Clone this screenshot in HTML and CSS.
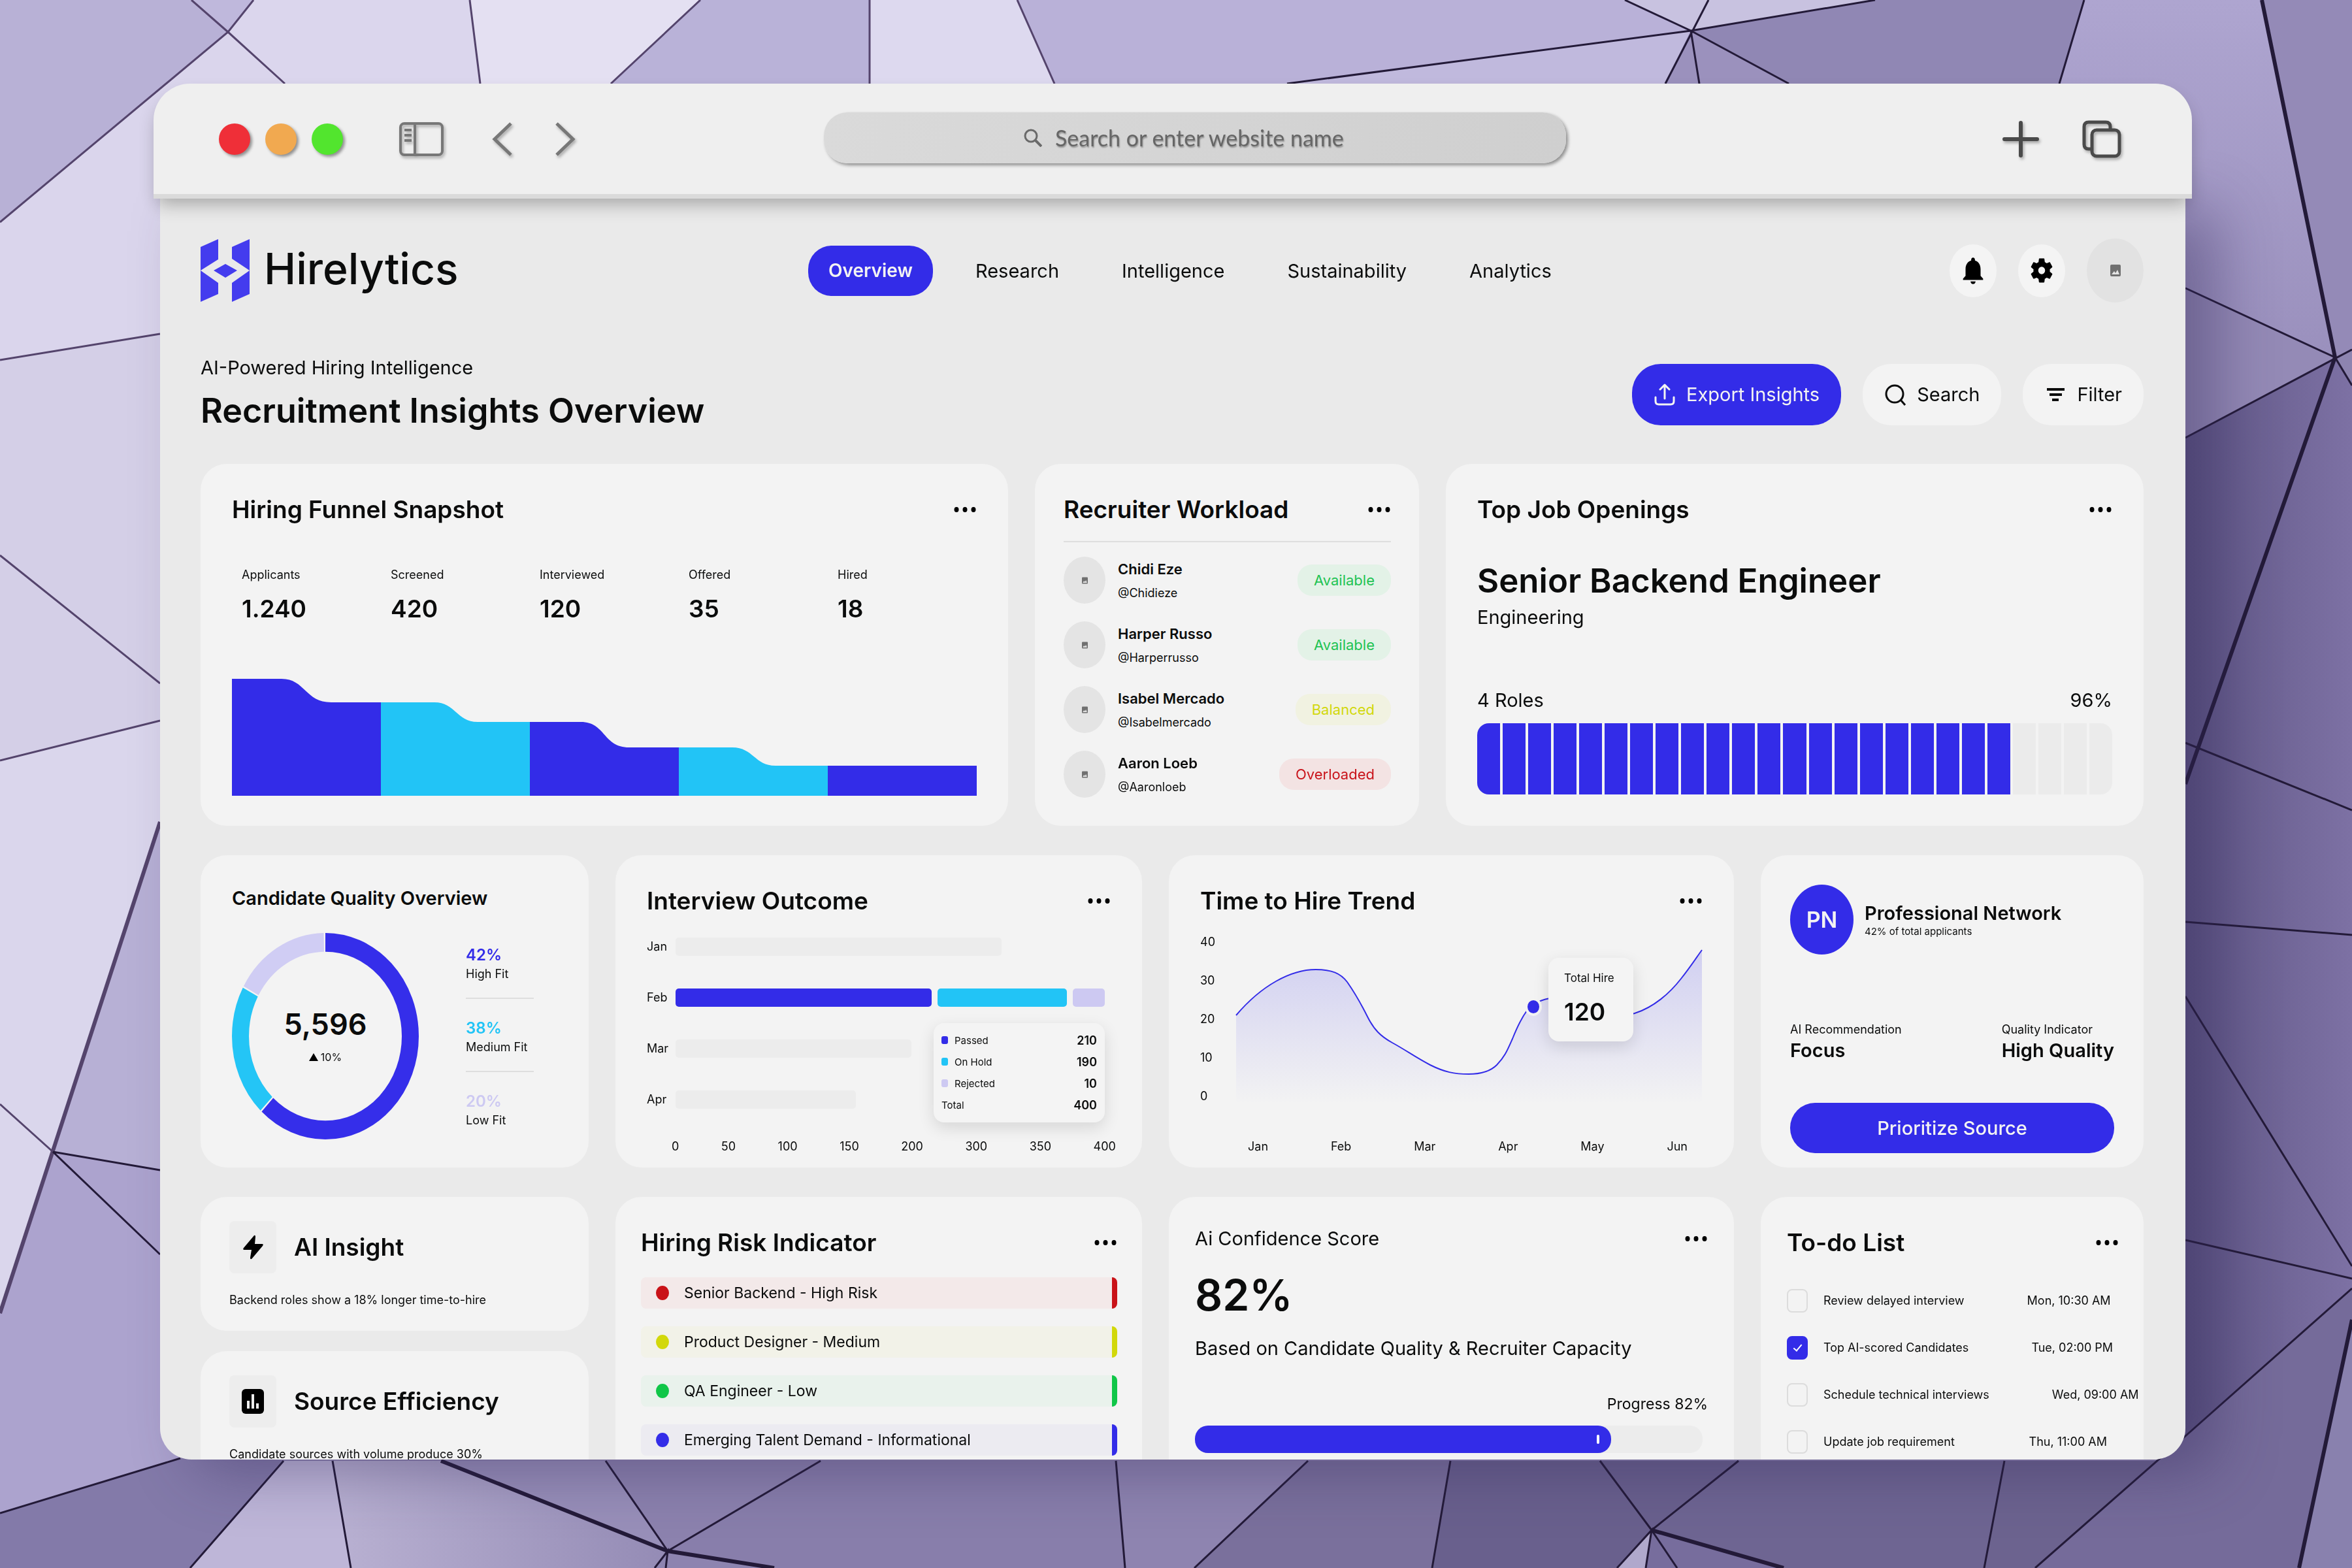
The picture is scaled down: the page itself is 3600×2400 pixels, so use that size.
FILE: index.html
```html
<!DOCTYPE html>
<html lang="en">
<head>
    <meta charset="UTF-8">
    <meta name="viewport" content="width=device-width, initial-scale=1.0">
    <title>Hirelytics</title>
    <link rel="stylesheet" href="styles.css">
</head>
<body>
    <!-- shared icons -->
    <svg class="sprite" aria-hidden="true">
        <symbol id="dots" viewBox="0 0 36 10">
            <ellipse cx="5" cy="5" rx="3.500" ry="4"/>
            <ellipse cx="18" cy="5" rx="3.500" ry="4"/>
            <ellipse cx="31" cy="5" rx="3.500" ry="4"/>
        </symbol>
        <symbol id="photo" viewBox="0 0 16 18">
            <rect width="16" height="18" rx="2" fill="#707070"/>
            <path d="M2 15l4-5 2 3 3-5 3 7z" fill="#e4e4e4"/>
        </symbol>
    </svg>

    <svg class="backdrop" viewBox="0 0 3600 2400" preserveAspectRatio="none" aria-hidden="true">
        <defs>
            <linearGradient id="gRight" x1="0" x2="1" y1="0" y2="0">
                <stop offset="0" stop-color="#5f5685"/>
                <stop offset="1" stop-color="#7d71a4"/>
            </linearGradient>
            <linearGradient id="gTopRight" x1="0" x2="0" y1="0" y2="1">
                <stop offset="0" stop-color="#aea5d0"/>
                <stop offset="1" stop-color="#9a90bd"/>
            </linearGradient>
            <linearGradient id="gBottom" x1="0" x2="1" y1="0" y2="0">
                <stop offset="0" stop-color="#b9b1d2"/>
                <stop offset="1" stop-color="#948bb5"/>
            </linearGradient>
        </defs>
        <rect width="3600" height="2400" fill="#8d84b0"/>
        <path fill="#b8b1d6" d="M0 0H293L349 49 0 340z"/>
        <path fill="#bfb8dc" d="M293 0H388L349 49z"/>
        <path fill="#dbd6ed" d="M388 0H719L735 128V300H436V128L349 49z"/>
        <path fill="#dad5ec" d="M0 340L349 49 436 128 245 511 0 551z"/>
        <path fill="#d4cfe7" d="M0 551L245 511V1103L0 1164z"/>
        <path fill="#dad6ec" d="M0 1164L245 1103V1258L0 2010z"/>
        <path fill="#b7b0d5" d="M245 1258V1791L81 1763z"/>
        <path fill="#aca3ce" d="M0 2010L81 1763 245 1791 276 2232 0 2316z"/>
        <path fill="#837aa9" d="M0 2316L276 2232H434L291 2400H0z"/>
        <path fill="#e4e0f2" d="M719 0H1072L935 128H735z"/>
        <path fill="#b9b2d8" d="M1072 0H1331V128H935z"/>
        <path fill="#ddd9ef" d="M1331 0H1557L1614 128H1331z"/>
        <path fill="#b9b1d8" d="M1557 0H2487L2588 47 1970 128H1614z"/>
        <path fill="#c0b9dd" d="M1970 128L2588 47 2549 128z"/>
        <path fill="#c8c2e0" d="M2487 0H2870L2588 47z"/>
        <path fill="#9b91bd" d="M2588 47L2549 128H2738z"/>
        <path fill="#9087b4" d="M2588 47L2870 0H3190L3152 128H2738z"/>
        <path fill="url(#gTopRight)" d="M3190 0H3462L3574 547 3345 441 3152 128z"/>
        <path fill="#948ab7" d="M3462 0H3600V535L3574 547z"/>
        <path fill="#948ab6" d="M3345 441L3574 547 3345 670z"/>
        <path fill="url(#gRight)" d="M3345 670L3574 547 3600 590V1972L3345 2198z"/>
        <path fill="#756b9a" d="M3302 2236L3345 2198 3600 1972V2020L3519 2400H3115z"/>
        <path fill="#8981ae" d="M3600 2020V2400H3519z"/>
        <path fill="#beb6d8" d="M434 2236H509L537 2400H291z"/>
        <path fill="url(#gBottom)" d="M509 2236H675L1022 2374 1002 2400H537z"/>
        <path fill="#988fb9" d="M675 2236H927L1022 2374z"/>
        <path fill="#8c82ae" d="M927 2236H1256L1022 2374z"/>
        <path fill="#887eab" d="M1256 2236H1708L1722 2400H1185L1022 2374z"/>
        <path fill="#8e84b0" d="M1708 2236H2002L1828 2400H1722z"/>
        <path fill="#7a709c" d="M2002 2236H2220L2192 2400H1828z"/>
        <path fill="#69608d" d="M2220 2236H2661L2528 2342 2475 2400H2192z"/>
        <path fill="#b0a8cc" d="M2528 2342L2475 2400H2519z"/>
        <path fill="#776d9d" d="M2528 2342L2519 2400H2730z"/>
        <path fill="#6e6592" d="M2661 2236H3068L3037 2400H2730L2528 2342z"/>
        <path fill="#6c638f" d="M3068 2236H3302L3115 2400H3037z"/>
        <g class="seams seams-light">
            <path d="M0 340L349 49 388 0M293 0L349 49 436 128M0 551L245 511M0 850L245 1046M0 1164L245 1103M0 1690L81 1763M719 0L735 128M1072 0L935 128M1331 0V128M1557 0L1614 128"/>
            <path class="thick" d="M0 2010L245 1258"/>
        </g>
        <g class="seams">
            <path d="M81 1763L245 1791M81 1763L245 1920M0 2316L276 2232M291 2400L434 2236M1970 128L2588 47 2870 0M2487 0L2588 47 2738 128M2615 0L2549 128M2588 47L2601 128M3190 0L3152 128M3345 441L3574 547 3600 590M3345 670L3600 535M3345 1137L3600 1240M3345 1411L3600 1431M3345 1525L3600 1938M3345 1898L3600 1957M3600 1972L3345 2198 3115 2400M509 2236L537 2400M927 2236L1022 2374 1256 2236M1002 2400L1022 2374 1019 2400M1708 2236L1722 2400M2002 2236L1828 2400M2220 2236L2192 2400M2449 2236L2528 2342 2661 2236M2475 2400L2528 2342 2519 2400M2528 2342L2567 2400M3068 2236L3037 2400"/>
            <path class="thick" d="M675 2236L1022 2374 1185 2400M3462 0L3574 547 3345 1200M3600 2020L3519 2400M2528 2342L2730 2400"/>
        </g>
    </svg>

    <div class="window">
        <div class="chrome">
            <div class="chrome-left">
                <div class="lights">
                    <span class="light red"></span>
                    <span class="light orange"></span>
                    <span class="light green"></span>
                </div>
                <button class="sidebar-btn" aria-label="Toggle sidebar">
                    <svg width="68" height="52" viewBox="0 0 68 52" fill="none" stroke="#777" stroke-width="4">
                        <rect x="2" y="2" width="64" height="48" rx="6"/>
                        <path d="M24 2V50M8 12H19M8 20H19M8 28H19"/>
                    </svg>
                </button>
                <button class="back-btn" aria-label="Back">
                    <svg width="32" height="52" viewBox="0 0 32 52" fill="none" stroke="#777" stroke-width="5"><path d="M29 2L4 26 29 50"/></svg>
                </button>
                <button aria-label="Forward">
                    <svg width="32" height="52" viewBox="0 0 32 52" fill="none" stroke="#777" stroke-width="5"><path d="M3 2L28 26 3 50"/></svg>
                </button>
            </div>
            <label class="address">
                <svg width="28" height="28" viewBox="0 0 28 28" fill="none" stroke="#6a6a6a" stroke-width="3"><circle cx="11" cy="11" r="9"/><path d="M18 18L27 27" stroke-width="4"/></svg>
                <input type="text" aria-label="Address" placeholder="Search or enter website name">
            </label>
            <div class="chrome-right">
                <button aria-label="New tab">
                    <svg width="56" height="56" viewBox="0 0 56 56" fill="none" stroke="#4a4a4a" stroke-width="6" stroke-linecap="round"><path d="M28 3V53M3 28H53"/></svg>
                </button>
                <button aria-label="Show tabs">
                    <svg width="60" height="58" viewBox="0 0 60 58" fill="none" stroke="#4a4a4a" stroke-width="5">
                        <rect x="15" y="15" width="42" height="40" rx="7"/>
                        <path d="M13 44H10Q3 44 3 37V10Q3 3 10 3H36Q43 3 43 10V13"/>
                    </svg>
                </button>
            </div>
        </div>

        <div class="page">
            <header class="topbar">
                <a href="#" class="logo">
                    <svg width="75" height="96" viewBox="0 0 75 96" fill="#443cee">
                        <path d="M0 12L27 0V31L0 48zM0 48L27 67V84L0 96zM48 12L75 0V48L48 30zM75 48V84L48 96V67zM20 48L38 38 56 48 38 59z"/>
                    </svg>
                    <span>Hirelytics</span>
                </a>
                <nav class="nav">
                    <a href="#" class="active">Overview</a>
                    <a href="#">Research</a>
                    <a href="#">Intelligence</a>
                    <a href="#">Sustainability</a>
                    <a href="#">Analytics</a>
                </nav>
                <div class="tools">
                    <button class="tool" aria-label="Notifications">
                        <svg width="46" height="50" viewBox="0 0 24 24" preserveAspectRatio="none"><path d="M12 22c1.100 0 2-.9 2-2h-4c0 1.100.89 2 2 2zM18 16v-5c0-3.070-1.640-5.640-4.500-6.320V4c0-.83-.67-1.500-1.500-1.500s-1.500.67-1.500 1.500v.68C7.630 5.360 6 7.920 6 11v5l-2 2v1h16v-1z"/></svg>
                    </button>
                    <button class="tool" aria-label="Settings">
                        <svg width="42" height="46" viewBox="0 0 24 24" preserveAspectRatio="none"><path d="M19.140 12.940c.04-.3.06-.61.06-.94 0-.32-.02-.64-.07-.94l2.030-1.580c.18-.14.23-.41.12-.61l-1.920-3.320c-.12-.22-.37-.29-.59-.22l-2.390.96c-.5-.38-1.030-.7-1.620-.94l-.36-2.540c-.04-.24-.24-.41-.48-.41h-3.840c-.24 0-.43.17-.47.41l-.36 2.540c-.59.24-1.130.57-1.620.94l-2.390-.96c-.22-.08-.47 0-.59.22L2.740 8.870c-.12.21-.08.47.12.61l2.030 1.580c-.05.3-.09.63-.09.94s.02.64.07.94l-2.030 1.580c-.18.14-.23.41-.12.61l1.920 3.320c.12.22.37.29.59.22l2.390-.96c.5.38 1.030.7 1.620.94l.36 2.540c.05.24.24.41.48.41h3.840c.24 0 .44-.17.47-.41l.36-2.540c.59-.24 1.130-.56 1.620-.94l2.390.96c.22.08.47 0 .59-.22l1.920-3.320c.12-.22.07-.47-.12-.61l-2.010-1.580zM12 15a3 3 0 110-6 3 3 0 010 6z"/></svg>
                    </button>
                    <span class="user"><svg width="16" height="18"><use href="#photo"/></svg></span>
                </div>
            </header>

            <section class="heading">
                <div>
                    <p>AI-Powered Hiring Intelligence</p>
                    <h1>Recruitment Insights Overview</h1>
                </div>
                <div class="actions">
                    <button class="action primary">
                        <svg width="34" height="34" viewBox="0 0 34 34" fill="none" stroke="currentColor" stroke-width="3" stroke-linecap="round" stroke-linejoin="round"><path d="M17 23V3M10 9L17 2 24 9M3 21V27Q3 32 8 32H26Q31 32 31 27V21"/></svg>
                        Export Insights
                    </button>
                    <button class="action">
                        <svg width="34" height="34" viewBox="0 0 34 34" fill="none" stroke="currentColor" stroke-width="3"><circle cx="16" cy="16" r="13"/><path d="M25 25L32 33"/></svg>
                        Search
                    </button>
                    <button class="action">
                        <svg width="34" height="34" viewBox="0 0 34 34" fill="none" stroke="currentColor" stroke-width="4"><path d="M4 9H31M8 17H27M12 25H22"/></svg>
                        Filter
                    </button>
                </div>
            </section>

            <div class="row row-top">
                <section class="card funnel">
                    <div class="card-head">
                        <h2>Hiring Funnel Snapshot</h2>
                        <button class="more" aria-label="More"><svg width="36" height="10"><use href="#dots"/></svg></button>
                    </div>
                    <dl class="stats">
                        <div><dt>Applicants</dt><dd>1.240</dd></div>
                        <div><dt>Screened</dt><dd>420</dd></div>
                        <div><dt>Interviewed</dt><dd>120</dd></div>
                        <div><dt>Offered</dt><dd>35</dd></div>
                        <div><dt>Hired</dt><dd>18</dd></div>
                    </dl>
                    <svg class="funnel-chart" viewBox="0 0 1140 179" preserveAspectRatio="none">
                        <path class="blue" d="M0 0H76C112 0 112 36 152 36H228V179H0z"/>
                        <path class="cyan" d="M228 36H310C342 36 344 66 376 66H456V179H228z"/>
                        <path class="blue" d="M456 66H534C572 66 568 105 608 105H684V179H456z"/>
                        <path class="cyan" d="M684 105H766C798 105 800 133 832 133H912V179H684z"/>
                        <path class="blue" d="M912 133H1140V179H912z"/>
                    </svg>
                </section>

                <section class="card workload">
                    <div class="card-head">
                        <h2>Recruiter Workload</h2>
                        <button class="more" aria-label="More"><svg width="36" height="10"><use href="#dots"/></svg></button>
                    </div>
                    <ul class="people">
                        <li>
                            <span class="avatar"><svg width="9" height="11"><use href="#photo"/></svg></span>
                            <div><strong>Chidi Eze</strong><span>@Chidieze</span></div>
                            <em class="status available">Available</em>
                        </li>
                        <li>
                            <span class="avatar"><svg width="9" height="11"><use href="#photo"/></svg></span>
                            <div><strong>Harper Russo</strong><span>@Harperrusso</span></div>
                            <em class="status available">Available</em>
                        </li>
                        <li>
                            <span class="avatar"><svg width="9" height="11"><use href="#photo"/></svg></span>
                            <div><strong>Isabel Mercado</strong><span>@Isabelmercado</span></div>
                            <em class="status balanced">Balanced</em>
                        </li>
                        <li>
                            <span class="avatar"><svg width="9" height="11"><use href="#photo"/></svg></span>
                            <div><strong>Aaron Loeb</strong><span>@Aaronloeb</span></div>
                            <em class="status overloaded">Overloaded</em>
                        </li>
                    </ul>
                </section>

                <section class="card openings">
                    <div class="card-head">
                        <h2>Top Job Openings</h2>
                        <button class="more" aria-label="More"><svg width="36" height="10"><use href="#dots"/></svg></button>
                    </div>
                    <h3>Senior Backend Engineer</h3>
                    <p>Engineering</p>
                    <div class="roles"><span>4 Roles</span><span>96%</span></div>
                    <div class="segments">
                        <i></i><i></i><i></i><i></i><i></i><i></i><i></i><i></i><i></i><i></i><i></i><i></i><i></i><i></i><i></i><i></i><i></i><i></i><i></i><i></i><i></i><i class="off"></i><i class="off"></i><i class="off"></i><i class="off"></i>
                    </div>
                </section>
            </div>

            <div class="row row-four">
                <section class="card quality">
                    <h2>Candidate Quality Overview</h2>
                    <div class="quality-body">
                        <div class="donut">
                            <svg viewBox="0 0 286 286" preserveAspectRatio="none">
                                <g fill="none" stroke-width="26" transform="rotate(-90 143 143)">
                                    <circle cx="143" cy="143" r="130" pathLength="360" stroke="#352eea" stroke-dasharray="223 137"/>
                                    <circle cx="143" cy="143" r="130" pathLength="360" stroke="#24c5f6" stroke-dasharray="74 286" stroke-dashoffset="-224"/>
                                    <circle cx="143" cy="143" r="130" pathLength="360" stroke="#d0cdf4" stroke-dasharray="60 300" stroke-dashoffset="-299"/>
                                </g>
                            </svg>
                            <div class="donut-label">
                                <strong>5,596</strong>
                                <span><svg width="14" height="12" viewBox="0 0 14 12"><path d="M7 0L14 12H0z"/></svg>10%</span>
                            </div>
                        </div>
                        <ul class="fits">
                            <li><strong class="high">42%</strong><span>High Fit</span></li>
                            <li><strong class="medium">38%</strong><span>Medium Fit</span></li>
                            <li><strong class="low">20%</strong><span>Low Fit</span></li>
                        </ul>
                    </div>
                </section>

                <section class="card outcome">
                    <div class="card-head">
                        <h2>Interview Outcome</h2>
                        <button class="more" aria-label="More"><svg width="36" height="10"><use href="#dots"/></svg></button>
                    </div>
                    <div class="bars">
                        <div class="bar-row"><span>Jan</span><div class="track"><i style="width: 76%"></i></div></div>
                        <div class="bar-row"><span>Feb</span><div class="track stacked"><i class="blue" style="flex-grow: 392"></i><i class="cyan" style="flex-grow: 198"></i><i class="lilac" style="flex-grow: 49"></i></div></div>
                        <div class="bar-row"><span>Mar</span><div class="track"><i style="width: 55%"></i></div></div>
                        <div class="bar-row"><span>Apr</span><div class="track"><i style="width: 42%"></i></div></div>
                        <table class="tip outcome-tip">
                            <tr><th><i class="blue"></i>Passed</th><td>210</td></tr>
                            <tr><th><i class="cyan"></i>On Hold</th><td>190</td></tr>
                            <tr><th><i class="lilac"></i>Rejected</th><td>10</td></tr>
                            <tr><th>Total</th><td>400</td></tr>
                        </table>
                    </div>
                    <div class="axis outcome-axis"><span>0</span><span>50</span><span>100</span><span>150</span><span>200</span><span>300</span><span>350</span><span>400</span></div>
                </section>

                <section class="card trend">
                    <div class="card-head">
                        <h2>Time to Hire Trend</h2>
                        <button class="more" aria-label="More"><svg width="36" height="10"><use href="#dots"/></svg></button>
                    </div>
                    <div class="trend-body">
                        <div class="scale"><span>40</span><span>30</span><span>20</span><span>10</span><span>0</span></div>
                        <div class="plot">
                            <svg viewBox="0 0 715 260" preserveAspectRatio="none">
                                <defs>
                                    <linearGradient id="area" x1="0" x2="0" y1="0" y2="1">
                                        <stop offset="0" stop-color="#332ce8" stop-opacity=".18"/>
                                        <stop offset="1" stop-color="#332ce8" stop-opacity="0"/>
                                    </linearGradient>
                                </defs>
                                <path fill="url(#area)" d="M1 124C40 78 85 54 123 54C148 54 161 60 171 73C185 93 194 110 202 126C212 146 222 156 240 166C262 178 275 188 298 200C320 211 335 214 357 214C378 214 392 208 400 200C412 188 416 178 424 160C432 140 438 128 446 117C452 110 460 102 481 98C520 92 570 135 611 121C640 112 665 90 682 68C697 49 706 35 714 24V260H1z"/>
                                <path fill="none" stroke="#332ce8" stroke-width="2" d="M1 124C40 78 85 54 123 54C148 54 161 60 171 73C185 93 194 110 202 126C212 146 222 156 240 166C262 178 275 188 298 200C320 211 335 214 357 214C378 214 392 208 400 200C412 188 416 178 424 160C432 140 438 128 446 117C452 110 460 102 481 98C520 92 570 135 611 121C640 112 665 90 682 68C697 49 706 35 714 24"/>
                                <ellipse cx="456" cy="111" rx="11" ry="12" fill="#332ce8" stroke="#f3f3f3" stroke-width="4"/>
                            </svg>
                            <div class="tip trend-tip"><span>Total Hire</span><strong>120</strong></div>
                        </div>
                    </div>
                    <div class="axis trend-axis"><span>Jan</span><span>Feb</span><span>Mar</span><span>Apr</span><span>May</span><span>Jun</span></div>
                </section>

                <section class="card network">
                    <div class="network-head">
                        <span class="badge">PN</span>
                        <div><h2>Professional Network</h2><p>42% of total applicants</p></div>
                    </div>
                    <dl class="facts">
                        <div><dt>AI Recommendation</dt><dd>Focus</dd></div>
                        <div><dt>Quality Indicator</dt><dd>High Quality</dd></div>
                    </dl>
                    <button class="prioritize">Prioritize Source</button>
                </section>
            </div>

            <div class="row row-four">
                <div class="insights">
                    <section class="card insight">
                        <div class="insight-head">
                            <span class="tile"><svg width="32" height="38" viewBox="0 0 32 38"><path d="M18 1Q20 0 20 3L19 14H30Q33 14 31 17L15 36Q12 39 12 35L14 23H3Q0 23 2 20z"/></svg></span>
                            <h2>AI Insight</h2>
                        </div>
                        <p>Backend roles show a 18% longer time-to-hire</p>
                    </section>
                    <section class="card insight">
                        <div class="insight-head">
                            <span class="tile"><svg width="34" height="38" viewBox="0 0 34 38"><rect width="34" height="38" rx="6"/><path fill="none" stroke="#eee" stroke-width="4" d="M10 18V30M17 8V30M24 22V30"/></svg></span>
                            <h2>Source Efficiency</h2>
                        </div>
                        <p>Candidate sources with volume produce 30%</p>
                    </section>
                </div>

                <section class="card risk">
                    <div class="card-head">
                        <h2>Hiring Risk Indicator</h2>
                        <button class="more" aria-label="More"><svg width="36" height="10"><use href="#dots"/></svg></button>
                    </div>
                    <ul class="risks">
                        <li class="red">Senior Backend - High Risk</li>
                        <li class="yellow">Product Designer - Medium</li>
                        <li class="green">QA Engineer - Low</li>
                        <li class="info">Emerging Talent Demand - Informational</li>
                    </ul>
                </section>

                <section class="card score">
                    <div class="card-head">
                        <p>Ai Confidence Score</p>
                        <button class="more" aria-label="More"><svg width="36" height="10"><use href="#dots"/></svg></button>
                    </div>
                    <strong>82%</strong>
                    <p>Based on Candidate Quality &amp; Recruiter Capacity</p>
                    <span class="score-note">Progress 82%</span>
                    <div class="score-bar"><i style="width: 82%"></i></div>
                </section>

                <section class="card todo">
                    <div class="card-head">
                        <h2>To-do List</h2>
                        <button class="more" aria-label="More"><svg width="36" height="10"><use href="#dots"/></svg></button>
                    </div>
                    <ul class="todos">
                        <li><label><input type="checkbox">Review delayed interview</label><time>Mon, 10:30 AM</time></li>
                        <li><label><input type="checkbox" checked>Top AI-scored Candidates</label><time>Tue, 02:00 PM</time></li>
                        <li><label><input type="checkbox">Schedule technical interviews</label><time>Wed, 09:00 AM</time></li>
                        <li><label><input type="checkbox">Update job requirement</label><time>Thu, 11:00 AM</time></li>
                    </ul>
                </section>
            </div>
        </div>
    </div>
</body>
</html>
```
FILE: styles.css
```css
:root {
    --blue: #332ce8;
    --cyan: #22c4f6;
    --lilac: #cdc9f2;
    --ink: #0b0c0c;
    --card: #f3f3f3;
    --page: #eaeaea;
    --line: #dedede;
}
* {
    box-sizing: border-box;
}
body {
    margin: 0;
    height: 100vh;
    padding: 128px 255px 166px 235px;
    overflow: hidden;
    font-family: Inter, "Liberation Sans", sans-serif;
    font-size: 18px;
    line-height: 24px;
    color: var(--ink);
}
h1, h2, h3, p, ul, dl, dd {
    margin: 0;
    padding: 0;
}
ul {
    list-style: none;
}
button {
    border: none;
    padding: 0;
    background: none;
    font: inherit;
    color: inherit;
    cursor: pointer;
}
svg {
    display: block;
    flex: none;
}
h2 {
    font-size: 37px;
    line-height: 44px;
    font-weight: 600;
}
.sprite {
    position: absolute;
    width: 0;
    height: 0;
}

/* backdrop */
.backdrop {
    position: fixed;
    inset: 0;
    width: 100%;
    height: 100%;
    z-index: -1;
}
.seams {
    fill: none;
    stroke: #231a38;
    stroke-width: 3;
}
.seams-light {
    stroke: #54446c;
}
.seams .thick {
    stroke-width: 6;
}

/* browser window */
.window {
    height: 100%;
    display: flex;
    flex-direction: column;
}
.chrome {
    position: relative;
    z-index: 1;
    flex: none;
    height: 176px;
    margin-right: -10px;
    padding: 0 108px 4px 100px;
    display: grid;
    grid-template-columns: 926fr 1137fr 850fr;
    align-items: center;
    background: #efefef;
    border-bottom: 7px solid #dadada;
    border-radius: 56px 56px 0 0;
    box-shadow: 0 14px 28px -6px rgba(0, 0, 0, 0.3);
}
.chrome-left, .chrome-right, .lights {
    display: flex;
    align-items: center;
}
.chrome-left, .chrome-right {
    padding-top: 5px;
}
.chrome-left svg, .chrome-right svg {
    filter: drop-shadow(2px 3px 2px rgba(0, 0, 0, 0.3));
}
.lights {
    gap: 23px;
    margin-right: 86px;
}
.light {
    width: 48px;
    height: 48px;
    border-radius: 50%;
    box-shadow: 3px 3px 4px rgba(0, 0, 0, 0.4);
}
.light.red {
    background: #ef2f38;
}
.light.orange {
    background: #f1a950;
}
.light.green {
    background: #52e52e;
}
.sidebar-btn {
    margin-right: 74px;
}
.back-btn {
    margin-right: 64px;
}
.address {
    height: 78px;
    padding-right: 28px;
    display: flex;
    align-items: center;
    justify-content: center;
    gap: 20px;
    border-radius: 36px;
    background: linear-gradient(100deg, #dadada, #cfcfcf);
    box-shadow: 3px 3px 5px rgba(0, 0, 0, 0.4);
}
.address input {
    width: 448px;
    padding: 0;
    border: none;
    outline: none;
    background: none;
    font-family: Lato, sans-serif;
    font-size: 34px;
}
.address input::placeholder {
    color: #666;
    opacity: 1;
    text-shadow: 1px 2px 2px rgba(0, 0, 0, 0.3);
}
.chrome-right {
    justify-content: flex-end;
    gap: 66px;
}

/* page */
.page {
    flex: 1;
    min-height: 0;
    overflow: hidden;
    margin-left: 10px;
    padding: 61px 64px 0 62px;
    background: var(--page);
    border-radius: 0 0 48px 48px;
    box-shadow: 50px 20px 90px rgba(50, 40, 90, 0.4);
}
.topbar {
    display: grid;
    grid-template-columns: 930fr 1746fr 298fr;
    align-items: center;
    height: 98px;
}
.logo {
    display: flex;
    align-items: center;
    gap: 22px;
    color: inherit;
    text-decoration: none;
    font-size: 66px;
    line-height: 80px;
    font-weight: 500;
}
.logo span {
    padding-bottom: 6px;
}
.nav {
    display: flex;
    gap: 34px;
}
.nav a {
    padding: 20px 31px;
    line-height: 37px;
    font-size: 29px;
    border-radius: 36px;
    color: inherit;
    text-decoration: none;
}
.nav .active {
    background: var(--blue);
    color: #f3f3f3;
    font-size: 28px;
    font-weight: 600;
}
.tools {
    display: flex;
    align-items: center;
    justify-content: flex-end;
    gap: 33px;
}
.tool, .user, .avatar, .tile, .badge {
    display: flex;
    align-items: center;
    justify-content: center;
    flex: none;
    border-radius: 50%;
}
.tool {
    width: 72px;
    height: 81px;
    background: #f4f4f4;
}
.user {
    width: 87px;
    height: 98px;
    background: #e2e2e2;
}
.heading {
    margin: 82px 0 53px;
    display: flex;
    align-items: center;
    justify-content: space-between;
    font-size: 29px;
    line-height: 36px;
}
.heading h1 {
    margin-top: 20px;
    font-size: 52px;
    line-height: 56px;
    font-weight: 600;
}
.actions {
    display: flex;
    gap: 33px;
    margin-top: 6px;
}
.action {
    display: flex;
    align-items: center;
    gap: 16px;
    height: 94px;
    padding: 0 33px;
    border-radius: 44px;
    background: #f3f3f3;
}
.action.primary {
    background: var(--blue);
    color: #f3f3f3;
}

/* cards */
.row {
    display: grid;
    gap: 41px;
    margin-bottom: 45px;
}
.row-top {
    grid-template-columns: minmax(0, 1236fr) minmax(0, 588fr) minmax(0, 1068fr);
}
.row-four {
    grid-template-columns: minmax(0, 594fr) minmax(0, 806fr) minmax(0, 865fr) minmax(0, 586fr);
}
.card {
    display: flex;
    flex-direction: column;
    padding: 48px;
    border-radius: 40px;
    background: var(--card);
}
.card-head {
    display: flex;
    align-items: center;
    justify-content: space-between;
    min-height: 44px;
}
.funnel {
    padding-bottom: 46px;
}
.stats {
    display: grid;
    grid-template-columns: repeat(5, 1fr);
    margin: 66px 0 85px;
}
.stats div {
    padding-left: 15px;
}
.stats dd {
    margin-top: 18px;
    font-size: 37px;
    line-height: 44px;
    font-weight: 600;
}
.funnel-chart {
    width: 100%;
    height: 179px;
}
svg .blue {
    fill: var(--blue);
}
svg .cyan {
    fill: var(--cyan);
}
i.blue {
    background: var(--blue);
}
i.cyan {
    background: var(--cyan);
}
i.lilac {
    background: var(--lilac);
}

.workload {
    padding: 48px 43px 42px 44px;
}
.people {
    display: grid;
    gap: 27px;
    margin-top: 26px;
    padding-top: 22px;
    border-top: 2px solid var(--line);
}
.people li {
    display: flex;
    align-items: center;
    gap: 19px;
}
.people strong, .people div span {
    display: block;
}
.people strong {
    margin-bottom: 11px;
    font-size: 22px;
    line-height: 28px;
    font-weight: 600;
}
.avatar {
    width: 64px;
    height: 72px;
    background: #e4e4e4;
}
.status {
    margin-left: auto;
    padding: 0 25px;
    font-size: 22px;
    line-height: 48px;
    font-style: normal;
    border-radius: 22px;
}
.available {
    color: #1fc353;
    background: #e3f2e7;
}
.balanced {
    color: #d2d80c;
    background: #f1f2e1;
}
.overloaded {
    color: #c9151c;
    background: #f3e3e3;
}

.openings {
    font-size: 29px;
    line-height: 34px;
}
.openings h3 {
    margin: 57px 0 9px;
    font-size: 51px;
    line-height: 60px;
    font-weight: 600;
}
.roles {
    display: flex;
    justify-content: space-between;
    margin: auto 0 18px;
}
.segments {
    display: grid;
    grid-template-columns: repeat(25, 1fr);
    gap: 4px;
    height: 109px;
    overflow: hidden;
    border-radius: 18px;
}
.segments i {
    background: var(--blue);
}
.segments .off {
    background: #ebebeb;
}

.quality {
    padding-bottom: 43px;
}
.quality h2, .network h2, .facts dd {
    font-size: 29px;
    line-height: 36px;
    white-space: nowrap;
}
.quality-body {
    display: flex;
    align-items: center;
    gap: 72px;
    margin-top: 35px;
}
.donut {
    display: grid;
    flex: none;
    width: 286px;
    height: 316px;
}
.donut > * {
    grid-area: 1 / 1;
    width: 100%;
    height: 100%;
}
.donut-label {
    display: flex;
    flex-direction: column;
    align-items: center;
    justify-content: center;
    gap: 12px;
}
.donut-label strong {
    font-size: 45px;
    line-height: 52px;
    font-weight: 600;
}
.donut-label span {
    display: flex;
    align-items: center;
    gap: 4px;
    font-size: 16px;
}
.fits {
    width: 104px;
}
.fits li + li {
    margin-top: 24px;
    padding-top: 28px;
    border-top: 2px solid var(--line);
}
.fits strong {
    display: block;
    font-size: 24px;
    line-height: 34px;
    font-weight: 600;
}
.fits .high {
    color: var(--blue);
}
.fits .medium {
    color: var(--cyan);
}
.fits .low {
    color: var(--lilac);
}

.outcome, .trend {
    padding-bottom: 20px;
}
.bars {
    position: relative;
    display: grid;
    gap: 50px;
    margin: 34px 9px 0 0;
}
.bar-row {
    display: flex;
    align-items: center;
    height: 28px;
}
.bar-row > span {
    width: 44px;
}
.track {
    display: flex;
    flex: 1;
    gap: 9px;
}
.track i {
    height: 28px;
    border-radius: 5px;
    background: #ececec;
}
.track .blue {
    background: var(--blue);
}
.track .cyan {
    background: var(--cyan);
}
.track .lilac {
    background: var(--lilac);
}
.tip {
    position: absolute;
    border-radius: 16px;
    background: #f4f4f4;
    box-shadow: 0 8px 24px rgba(0, 0, 0, 0.12);
}
.outcome-tip {
    top: 131px;
    right: 0;
    width: 262px;
    padding: 10px 12px;
    border-spacing: 0;
}
.outcome-tip th, .outcome-tip td {
    height: 33px;
    padding: 0;
}
.outcome-tip th {
    font-size: 15px;
    font-weight: 400;
    text-align: left;
}
.outcome-tip td {
    font-weight: 600;
    text-align: right;
}
.outcome-tip i {
    display: inline-block;
    width: 10px;
    height: 12px;
    margin-right: 10px;
    border-radius: 3px;
}
.axis {
    display: flex;
    justify-content: space-between;
}
.outcome-axis {
    margin: 46px -8px 0 38px;
}
.trend-body {
    display: flex;
    margin-top: 29px;
}
.scale {
    display: grid;
    gap: 35px;
    width: 54px;
}
.plot {
    position: relative;
    flex: 1;
}
.plot svg {
    width: 100%;
    height: 260px;
}
.trend-tip {
    left: 67%;
    top: 36px;
    width: 130px;
    height: 128px;
    padding: 19px 24px;
    font-size: 17px;
    white-space: nowrap;
}
.trend-tip strong {
    display: block;
    margin-top: 18px;
    font-size: 37px;
    line-height: 44px;
    font-weight: 600;
}
.trend-axis {
    margin: 53px 23px 0 73px;
}

.network {
    padding: 45px 45px 22px;
}
.network-head {
    display: flex;
    align-items: center;
    gap: 17px;
}
.network-head p {
    font-size: 15px;
    line-height: 20px;
}
.badge {
    width: 97px;
    height: 107px;
    background: var(--blue);
    color: #f3f3f3;
    font-size: 34px;
    font-weight: 600;
}
.facts {
    display: flex;
    justify-content: space-between;
    margin: 103px 0 62px;
}
.facts dd {
    margin-top: 2px;
    font-weight: 600;
}
.prioritize {
    height: 77px;
    border-radius: 38px;
    background: var(--blue);
    color: #f3f3f3;
    font-size: 29px;
    font-weight: 500;
}

.insights {
    display: grid;
    gap: 31px;
    align-content: start;
}
.insight {
    padding: 37px 44px 35px;
}
.insight-head {
    display: flex;
    align-items: center;
    gap: 27px;
    margin-bottom: 29px;
}
.tile {
    width: 72px;
    height: 80px;
    border-radius: 8px;
    background: #ededed;
}
.risk {
    padding: 48px 38px 48px 39px;
}
.risks {
    display: grid;
    gap: 27px;
    margin-top: 31px;
}
.risks li {
    display: flex;
    align-items: center;
    gap: 23px;
    height: 48px;
    padding-left: 23px;
    border-radius: 8px;
    border-right: 8px solid;
    font-size: 23px;
}
.risks li::before {
    content: "";
    width: 20px;
    height: 22px;
    border-radius: 50%;
}
.risks .red {
    background: #f3e9e9;
    border-color: #c91218;
}
.risks .yellow {
    background: #f2f2e8;
    border-color: #d2d80a;
}
.risks .green {
    background: #e9f2ec;
    border-color: #10c648;
}
.risks .info {
    background: #ecebf1;
    border-color: var(--blue);
}
.risks .red::before {
    background: #c91218;
}
.risks .yellow::before {
    background: #d2d80a;
}
.risks .green::before {
    background: #10c648;
}
.risks .info::before {
    background: var(--blue);
}

.score {
    padding: 42px 40px 48px;
    font-size: 29px;
    line-height: 36px;
}
.score > strong {
    margin: 24px 0;
    font-size: 66px;
    line-height: 80px;
    font-weight: 600;
}
.score-note {
    margin: 51px 0 17px;
    font-size: 23px;
    line-height: 32px;
    text-align: right;
}
.score-bar {
    height: 42px;
    margin-right: 8px;
    border-radius: 20px;
    background: #ececec;
}
.score-bar i {
    display: flex;
    align-items: center;
    justify-content: flex-end;
    height: 100%;
    padding-right: 18px;
    border-radius: 20px;
    background: var(--blue);
}
.score-bar i::after {
    content: "";
    width: 4px;
    height: 14px;
    border-radius: 2px;
    background: #fff;
}

.todo {
    padding: 48px 38px 48px 40px;
}
.todos {
    display: grid;
    grid-template-columns: minmax(0, 1fr);
    gap: 36px;
    margin: 49px 18px 0 0;
}
.todos li, .todos label {
    display: flex;
    align-items: center;
    white-space: nowrap;
}
.todos li {
    justify-content: space-between;
    gap: 96px;
    height: 36px;
}
.todos label, .todos time {
    flex: none;
}
.todos input {
    appearance: none;
    display: flex;
    align-items: center;
    justify-content: center;
    width: 32px;
    height: 36px;
    margin: 0 24px 0 0;
    border: 2px solid #dcdcdc;
    border-radius: 8px;
}
.todos input:checked {
    border-color: var(--blue);
    background: var(--blue);
}
.todos input:checked::after {
    content: "";
    width: 5px;
    height: 11px;
    margin-bottom: 3px;
    border: solid #fff;
    border-width: 0 2px 2px 0;
    transform: rotate(40deg);
}
```
